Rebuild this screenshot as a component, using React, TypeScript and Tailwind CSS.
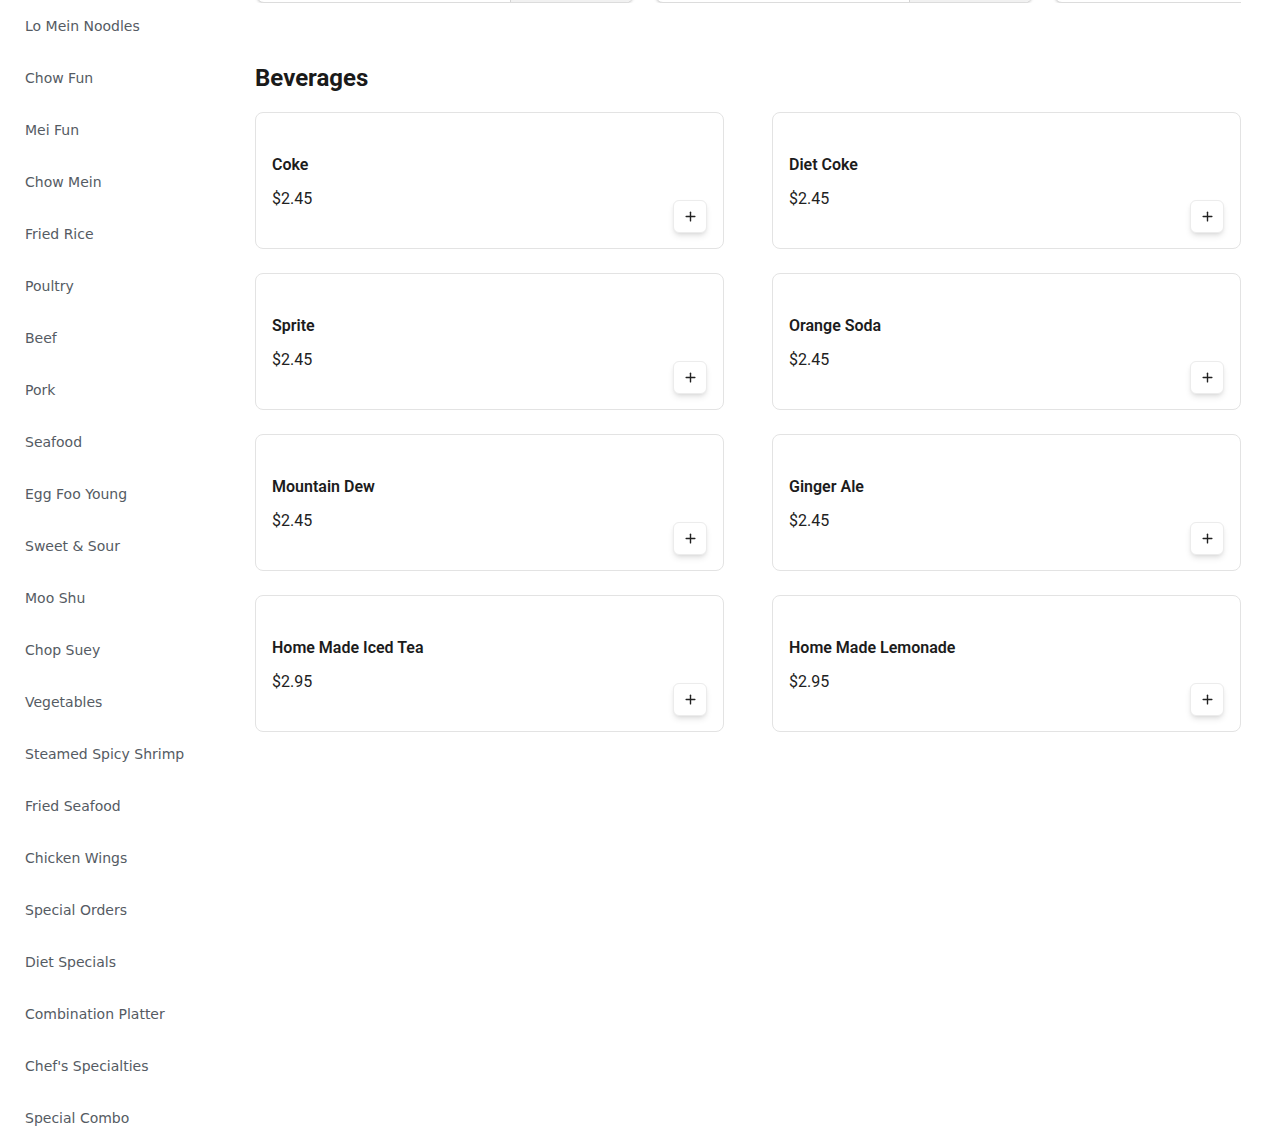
import { Plus } from "lucide-react";

const categories = [
    "Lo Mein Noodles",
    "Chow Fun",
    "Mei Fun",
    "Chow Mein",
    "Fried Rice",
    "Poultry",
    "Beef",
    "Pork",
    "Seafood",
    "Egg Foo Young",
    "Sweet & Sour",
    "Moo Shu",
    "Chop Suey",
    "Vegetables",
    "Steamed Spicy Shrimp",
    "Fried Seafood",
    "Chicken Wings",
    "Special Orders",
    "Diet Specials",
    "Combination Platter",
    "Chef's Specialties",
    "Special Combo",
];

const beverages = [
    { name: "Coke", price: "$2.45" },
    { name: "Diet Coke", price: "$2.45" },
    { name: "Sprite", price: "$2.45" },
    { name: "Orange Soda", price: "$2.45" },
    { name: "Mountain Dew", price: "$2.45" },
    { name: "Ginger Ale", price: "$2.45" },
    { name: "Home Made Iced Tea", price: "$2.95" },
    { name: "Home Made Lemonade", price: "$2.95" },
];

const App = () => {
    return (
        <div className="flex min-h-screen bg-white">
            <aside className="w-[255px] shrink-0 pl-[25px] font-['DejaVu_Sans',sans-serif] text-sm text-[#555b63]">
                {categories.map((c) => (
                    <div key={c} className="py-4 leading-5 last:pb-0">
                        {c}
                    </div>
                ))}
            </aside>

            <main className="flex-1 min-w-0 pr-6 font-['Roboto',sans-serif]">
                {/* bottom edge of the previous section's cards */}
                <div className="w-full h-[3px] overflow-hidden flex items-end gap-[21px] pl-px">
                    {[0, 1, 2].map((i) => (
                        <div
                            key={i}
                            className="h-[60px] w-[378px] shrink-0 flex rounded-lg border border-[#dcdcdc] bg-white shadow-sm overflow-hidden"
                        >
                            <div className="flex-1" />
                            <div className="w-[123px] bg-[#f1f1f1] border-l border-[#d4d4d4]" />
                        </div>
                    ))}
                </div>

                <h2 className="mt-[59px] mb-[18px] text-2xl leading-8 font-bold text-[#1a1a1a]">Beverages</h2>

                <div className="grid grid-cols-2 gap-x-12 gap-y-6">
                    {beverages.map((b) => (
                        <div
                            key={b.name}
                            className="h-[137px] flex justify-between rounded-lg border border-[#e3e3e3] bg-white px-4 pb-[15px] pt-10"
                        >
                            <div>
                                <div className="text-base leading-6 font-semibold text-[#1c1c1c]">{b.name}</div>
                                <div className="mt-[10px] text-base leading-6 text-[#222222]">{b.price}</div>
                            </div>
                            <button className="self-end w-[34px] h-[33px] flex items-center justify-center rounded-md border border-[#ececec] bg-white shadow-md text-[#222]">
                                <Plus size={15} strokeWidth={2.25} />
                            </button>
                        </div>
                    ))}
                </div>
            </main>
        </div>
    );
};

export default App;
